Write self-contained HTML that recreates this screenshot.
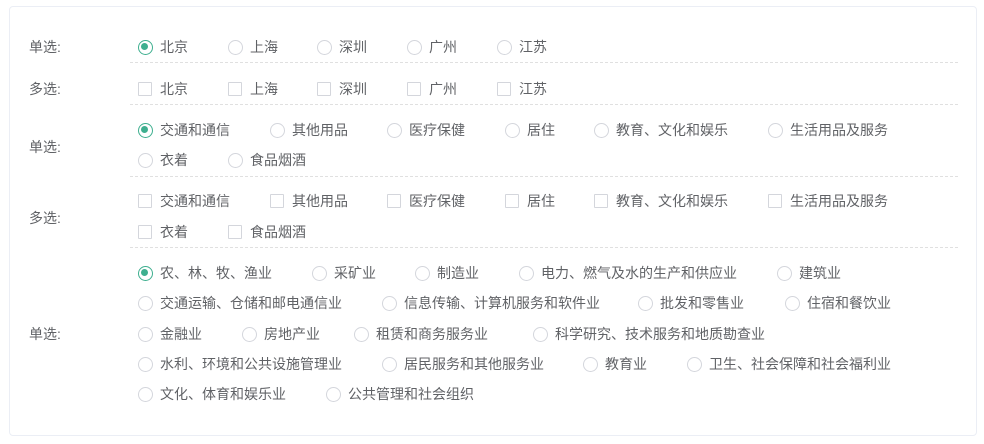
<!DOCTYPE html>
<html><head><meta charset="utf-8"><style>
*{margin:0;padding:0;box-sizing:border-box}
body{width:984px;height:444px;background:#fff;font-family:"Liberation Sans","Noto Sans CJK SC",sans-serif;font-size:14px;color:#606266;position:relative;overflow:hidden}
.card{position:absolute;left:9px;top:6px;width:968px;height:430px;border:1px solid #ebeef5;border-radius:4px}
.l{position:absolute;left:29px;line-height:18px;white-space:nowrap}
.i{position:absolute;line-height:18px;white-space:nowrap;padding-left:22px}
.i::before{content:"";position:absolute;left:0;top:2px;width:13px;height:13px;border:1px solid #d4d6dc;border-radius:50%;background:#fff}
.c::before{border-radius:1px;width:12px;height:12px}
.on::before{border-color:#3eaf8f}
.on::after{content:"";position:absolute;left:3px;top:5px;width:7px;height:7px;border-radius:50%;background:#3eaf8f}
.d{position:absolute;left:130px;width:828px;border-top:1px dashed #e0e0e0;height:0}
</style></head><body>
<div class="card"></div>
<div class="l" style="top:38px">单选:</div>
<div class="i on" style="left:138px;top:38px">北京</div>
<div class="i" style="left:228px;top:38px">上海</div>
<div class="i" style="left:317px;top:38px">深圳</div>
<div class="i" style="left:407px;top:38px">广州</div>
<div class="i" style="left:497px;top:38px">江苏</div>
<div class="d" style="top:62px"></div>

<div class="l" style="top:80px">多选:</div>
<div class="i c" style="left:138px;top:80px">北京</div>
<div class="i c" style="left:228px;top:80px">上海</div>
<div class="i c" style="left:317px;top:80px">深圳</div>
<div class="i c" style="left:407px;top:80px">广州</div>
<div class="i c" style="left:497px;top:80px">江苏</div>
<div class="d" style="top:104px"></div>

<div class="l" style="top:138px">单选:</div>
<div class="i on" style="left:138px;top:121px">交通和通信</div>
<div class="i" style="left:270px;top:121px">其他用品</div>
<div class="i" style="left:387px;top:121px">医疗保健</div>
<div class="i" style="left:505px;top:121px">居住</div>
<div class="i" style="left:594px;top:121px">教育、文化和娱乐</div>
<div class="i" style="left:768px;top:121px">生活用品及服务</div>
<div class="i" style="left:138px;top:151px">衣着</div>
<div class="i" style="left:228px;top:151px">食品烟酒</div>
<div class="d" style="top:176px"></div>

<div class="l" style="top:209px">多选:</div>
<div class="i c" style="left:138px;top:192px">交通和通信</div>
<div class="i c" style="left:270px;top:192px">其他用品</div>
<div class="i c" style="left:387px;top:192px">医疗保健</div>
<div class="i c" style="left:505px;top:192px">居住</div>
<div class="i c" style="left:594px;top:192px">教育、文化和娱乐</div>
<div class="i c" style="left:768px;top:192px">生活用品及服务</div>
<div class="i c" style="left:138px;top:223px">衣着</div>
<div class="i c" style="left:228px;top:223px">食品烟酒</div>
<div class="d" style="top:247px"></div>

<div class="l" style="top:325px">单选:</div>
<div class="i on" style="left:138px;top:264px">农、林、牧、渔业</div>
<div class="i" style="left:312px;top:264px">采矿业</div>
<div class="i" style="left:415px;top:264px">制造业</div>
<div class="i" style="left:519px;top:264px">电力、燃气及水的生产和供应业</div>
<div class="i" style="left:777px;top:264px">建筑业</div>
<div class="i" style="left:138px;top:294px">交通运输、仓储和邮电通信业</div>
<div class="i" style="left:382px;top:294px">信息传输、计算机服务和软件业</div>
<div class="i" style="left:638px;top:294px">批发和零售业</div>
<div class="i" style="left:785px;top:294px">住宿和餐饮业</div>
<div class="i" style="left:138px;top:325px">金融业</div>
<div class="i" style="left:242px;top:325px">房地产业</div>
<div class="i" style="left:354px;top:325px">租赁和商务服务业</div>
<div class="i" style="left:533px;top:325px">科学研究、技术服务和地质勘查业</div>
<div class="i" style="left:138px;top:355px">水利、环境和公共设施管理业</div>
<div class="i" style="left:382px;top:355px">居民服务和其他服务业</div>
<div class="i" style="left:583px;top:355px">教育业</div>
<div class="i" style="left:687px;top:355px">卫生、社会保障和社会福利业</div>
<div class="i" style="left:138px;top:385px">文化、体育和娱乐业</div>
<div class="i" style="left:326px;top:385px">公共管理和社会组织</div>
</body></html>
